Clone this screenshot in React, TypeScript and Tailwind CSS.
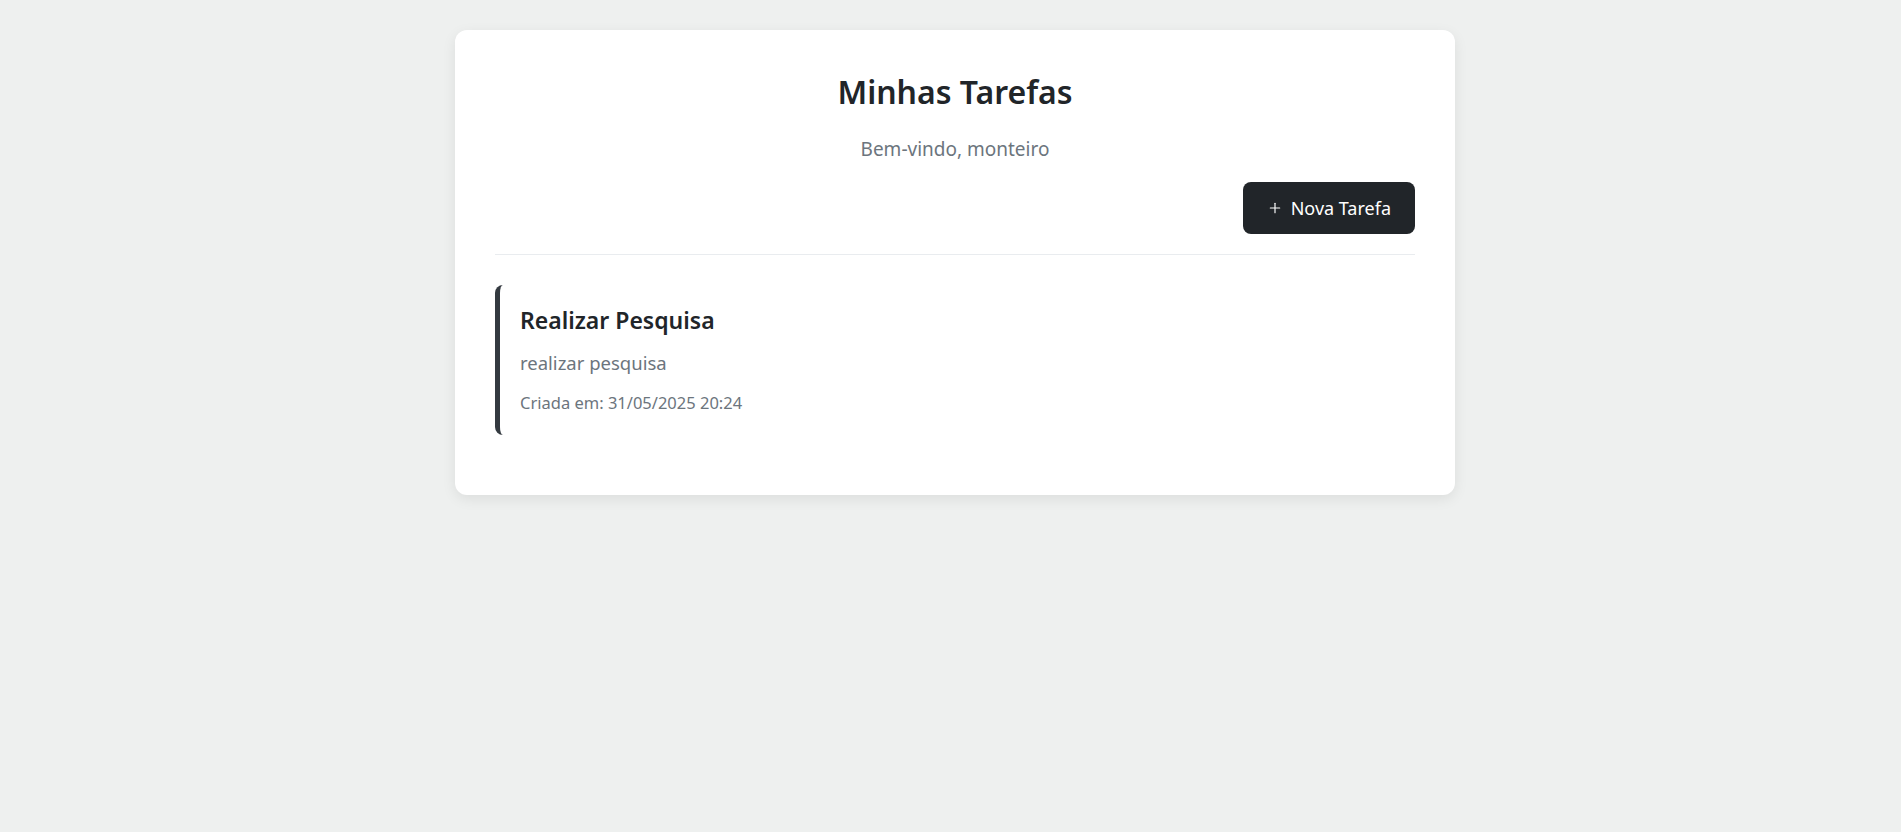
import { Plus } from "lucide-react";

interface Task {
  id: number;
  title: string;
  description: string;
  createdAt: string;
}

const tasks: Task[] = [
  {
    id: 1,
    title: "Realizar Pesquisa",
    description: "realizar pesquisa",
    createdAt: "31/05/2025 20:24",
  },
];

export default function App() {
  return (
    <div className="flex min-h-screen justify-center bg-[#eef0ef] pl-[9px] pt-[30px] font-['Noto_Sans',sans-serif] text-[#212529]">
      <div className="h-fit w-[1000px] rounded-xl bg-white p-10 shadow-[0_4px_14px_rgba(0,0,0,0.08)]">
        <div className="border-b border-[#e9ecef] pb-5">
          <h2 className="text-center text-[32px] font-semibold leading-[1.4]">
            Minhas Tarefas
          </h2>
          <p className="mt-5 text-center text-[19px] leading-normal text-[#6c757d]">
            Bem-vindo, monteiro
          </p>
          <div className="mt-[19px] flex justify-end">
            <button className="flex h-[52px] items-center gap-2 rounded-lg bg-[#212529] px-6 text-[18px] text-white">
              <Plus className="h-4 w-4" strokeWidth={1.75} />
              Nova Tarefa
            </button>
          </div>
        </div>

        <div className="mt-[30px] flex flex-col gap-4">
          {tasks.map((task) => (
            <div
              key={task.id}
              className="mb-5 rounded-lg border-l-[5px] border-[#343a40] px-5 pb-5 pt-[22px]"
            >
              <h4 className="text-[23px] font-semibold leading-[1.2]">
                {task.title}
              </h4>
              <p className="mt-[14px] text-[18.5px] leading-normal text-[#6c757d]">
                {task.description}
              </p>
              <p className="mt-[14px] text-[16.5px] leading-normal text-[#6c757d]">
                Criada em: {task.createdAt}
              </p>
            </div>
          ))}
        </div>
      </div>
    </div>
  );
}
